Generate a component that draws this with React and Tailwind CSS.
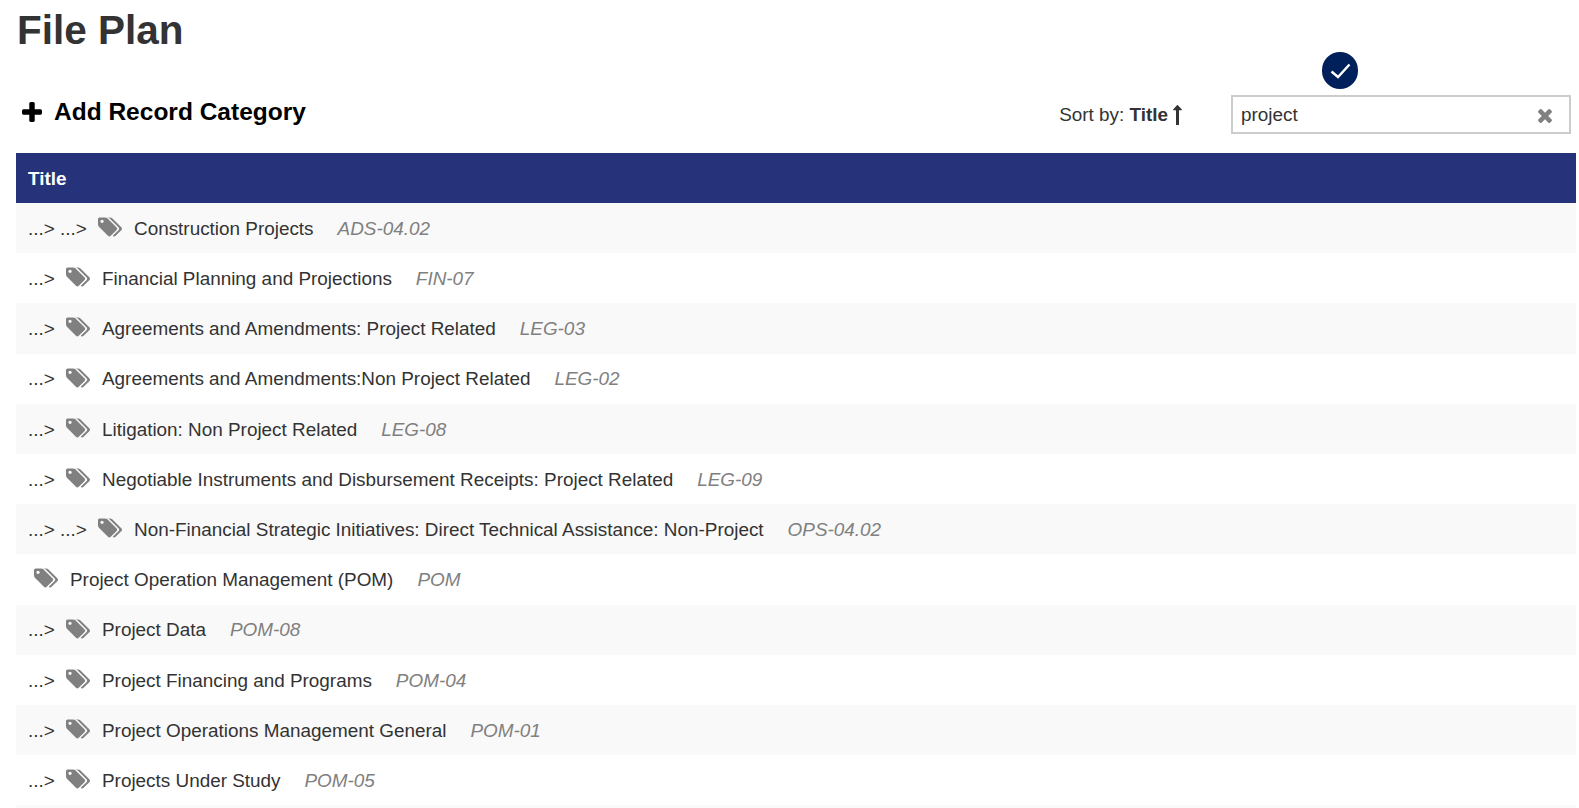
import React from "react";

const records = [
  { depth: 2, title: "Construction Projects", code: "ADS-04.02" },
  { depth: 1, title: "Financial Planning and Projections", code: "FIN-07" },
  { depth: 1, title: "Agreements and Amendments: Project Related", code: "LEG-03" },
  { depth: 1, title: "Agreements and Amendments:Non Project Related", code: "LEG-02" },
  { depth: 1, title: "Litigation: Non Project Related", code: "LEG-08" },
  { depth: 1, title: "Negotiable Instruments and Disbursement Receipts: Project Related", code: "LEG-09" },
  { depth: 2, title: "Non-Financial Strategic Initiatives: Direct Technical Assistance: Non-Project", code: "OPS-04.02" },
  { depth: 0, title: "Project Operation Management (POM)", code: "POM" },
  { depth: 1, title: "Project Data", code: "POM-08" },
  { depth: 1, title: "Project Financing and Programs", code: "POM-04" },
  { depth: 1, title: "Project Operations Management General", code: "POM-01" },
  { depth: 1, title: "Projects Under Study", code: "POM-05" },
  { depth: 0, title: "", code: "" },
];

const TagsIcon = () => (
  <svg viewBox="-64 128 1899 1515" className="w-6 h-5 ml-[6px] -mt-[4px] shrink-0" fill="#808080">
    <path d="M384 448q0-53-37.5-90.5t-90.5-37.5-90.5 37.5-37.5 90.5 37.5 90.5 90.5 37.5 90.5-37.5 37.5-90.5zm1067 576q0 53-37 90l-491 492q-39 37-91 37-53 0-90-37l-715-716q-38-37-64.5-101t-26.5-117v-416q0-52 38-90t90-38h416q53 0 117 26.5t102 64.5l715 714q37 39 37 91zm384 0q0 53-37 90l-491 492q-39 37-91 37-36 0-59-14t-53-45l470-470q37-37 37-90 0-52-37-91l-715-714q-38-38-102-64.5t-117-26.5h224q53 0 117 26.5t102 64.5l715 714q37 39 37 91z" />
  </svg>
);

const Row = ({ record, shaded }) => (
  <div className={`flex items-center h-[50.2px] pl-3 pt-[2px] text-[18.9px] text-[#333] ${shaded ? "bg-[#f9f9f9]" : "bg-white"}`}>
    {Array.from({ length: record.depth }).map((_, i) => (
      <span key={i} className="w-8 shrink-0">...&gt;</span>
    ))}
    {record.title && (
      <>
        <TagsIcon />
        <span className="ml-3">{record.title}</span>
        <span className="ml-6 italic text-[#808080]">{record.code}</span>
      </>
    )}
  </div>
);

export default function App() {
  return (
    <div className="h-[808px] overflow-hidden bg-white pl-4 pr-[3px] font-['Liberation_Sans',Arial,sans-serif]">
      <h1 className="pt-[7px] ml-px text-[40.5px] leading-[46px] font-bold text-[#333]">File Plan</h1>

      <div className="relative flex items-start h-[100px]">
        <div className="flex items-center mt-[44px] ml-[6px] text-black">
          <svg viewBox="192 128 1408 1408" className="w-5 h-5" fill="currentColor">
            <path d="M1600 736v192q0 40-28 68t-68 28h-416v416q0 40-28 68t-68 28h-192q-40 0-68-28t-28-68v-416h-416q-40 0-68-28t-28-68v-192q0-40 28-68t68-28h416v-416q0-40 28-68t68-28h192q40 0 68 28t28 68v416h416q40 0 68 28t28 68z" />
          </svg>
          <span className="ml-3 text-[24.5px] leading-[30px] font-bold">Add Record Category</span>
        </div>
        <div className="flex items-center ml-auto mt-[48px] text-[18.9px] text-[#333]">
          Sort by:&nbsp;<b>Title</b>
          <svg viewBox="512 64 768 1728" className="w-[9px] h-5 ml-[5px]" fill="#333">
            <path d="M1277 493q-9 19-29 19h-224v1248q0 14-9 23t-23 9h-192q-14 0-23-9t-9-23v-1248h-224q-21 0-29-19t5-35l350-384q10-10 23-10 14 0 24 10l355 384q13 16 5 35z" />
          </svg>
        </div>
        <div className="flex items-center justify-between w-[340px] h-[39px] ml-[49px] mr-[5px] mt-[42px] border-2 border-[#ccc] px-2 text-[18.9px] text-[#333]">
          <span className="mt-px">project</span>
          <svg viewBox="302 366 1188 1188" className="w-[14px] h-[14px] mr-[9px] mt-[3px]" fill="#808080">
            <path d="M1490 1322q0 40-28 68l-136 136q-28 28-68 28t-68-28l-294-294-294 294q-28 28-68 28t-68-28l-136-136q-28-28-28-68t28-68l294-294-294-294q-28-28-28-68t28-68l136-136q28-28 68-28t68 28l294 294 294-294q28-28 68-28t68 28l136 136q28 28 28 68t-28 68l-294 294 294 294q28 28 28 68z" />
          </svg>
        </div>
        <div className="absolute right-[218px] -top-px flex items-center justify-center w-9 h-[37px] rounded-full bg-[#00205b] text-white">
          <svg viewBox="0 0 36 37" className="w-9 h-[37px]" fill="none" stroke="currentColor" strokeWidth="2.4">
            <path d="M9.5 19.5l6.5 5.5 11.5-12.5" />
          </svg>
        </div>
      </div>

      <div className="flex items-center h-[50px] bg-[#26327a] pl-3 pt-[2px] text-[18.9px] font-bold text-white">Title</div>
      {records.map((record, index) => (
        <Row key={index} record={record} shaded={index % 2 === 0} />
      ))}
    </div>
  );
}
